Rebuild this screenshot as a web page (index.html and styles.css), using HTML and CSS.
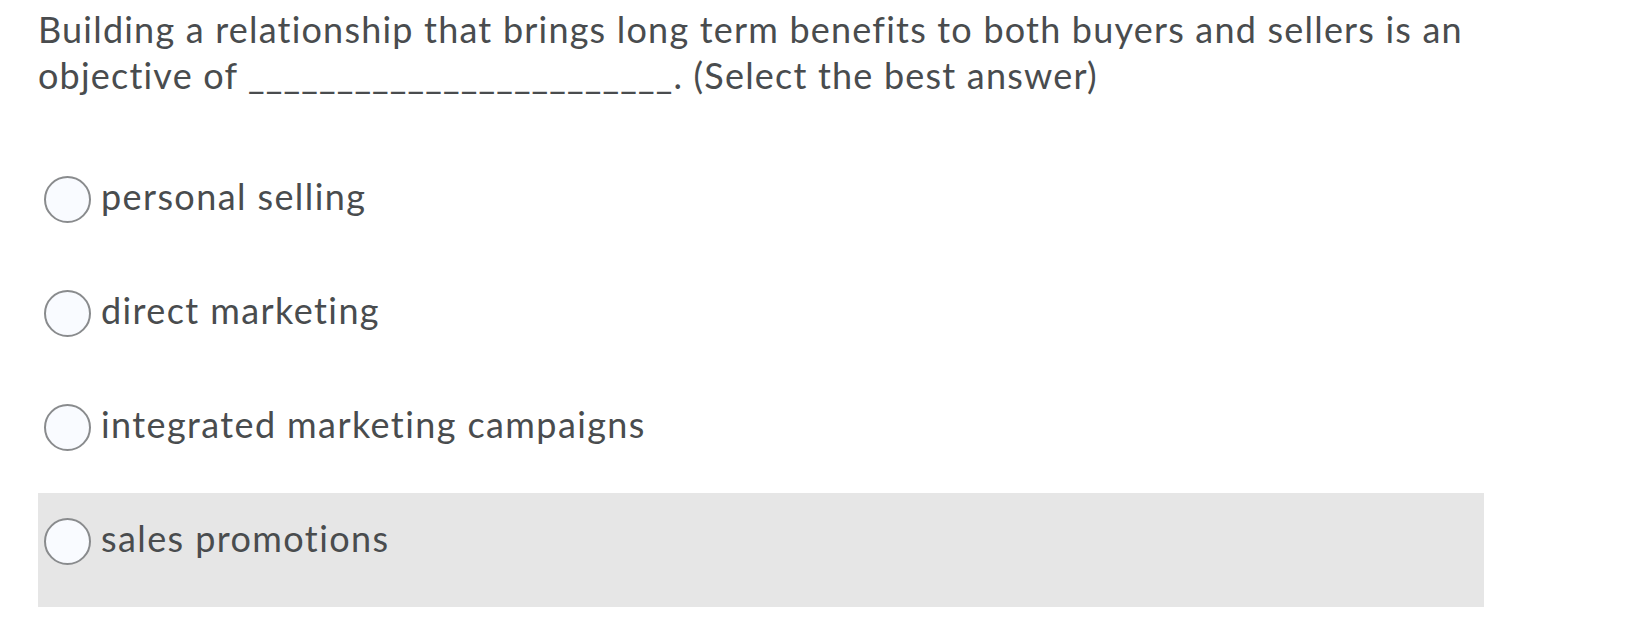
FILE: index.html
```html
<!DOCTYPE html>
<html lang="en">
<head>
<meta charset="utf-8">
<link rel="stylesheet" href="styles.css">
</head>
<body>
<div class="quiz">
  <p class="question">Building a relationship that brings long term benefits to both buyers and sellers is an objective of ________________________. (Select the best answer)</p>
  <div class="options">
    <label class="option"><span class="radio"></span><span class="label">personal selling</span></label>
    <label class="option"><span class="radio"></span><span class="label">direct marketing</span></label>
    <label class="option"><span class="radio"></span><span class="label">integrated marketing campaigns</span></label>
    <label class="option hover"><span class="radio"></span><span class="label">sales promotions</span></label>
  </div>
</div>
</body>
</html>
```

FILE: styles.css
```css
html, body {
  margin: 0;
  padding: 0;
  background: #ffffff;
}
body {
  font-family: Lato, "Open Sans", sans-serif;
  color: #494c4e;
}
.quiz {
  padding-left: 38px;
}
.question {
  margin: 0;
  width: 1470px;
  padding-top: 6px;
  font-size: 36px;
  line-height: 46px;
  letter-spacing: 1.2px;
}
.options {
  width: 1446px;
  margin-top: 53px;
  display: flex;
  flex-direction: column;
}
.option {
  display: flex;
  align-items: center;
  gap: 10px;
  height: 114px;
  box-sizing: border-box;
  padding: 0 0 18px 6px;
  font-size: 36px;
  letter-spacing: 1.4px;
}
.option.hover {
  background: #e6e6e6;
}
.label {
  margin-bottom: 6px;
}
.radio {
  width: 47px;
  height: 47px;
  box-sizing: border-box;
  border: 2px solid #898b8d;
  border-radius: 50%;
  background: #f9fbff;
  flex: none;
}
```
